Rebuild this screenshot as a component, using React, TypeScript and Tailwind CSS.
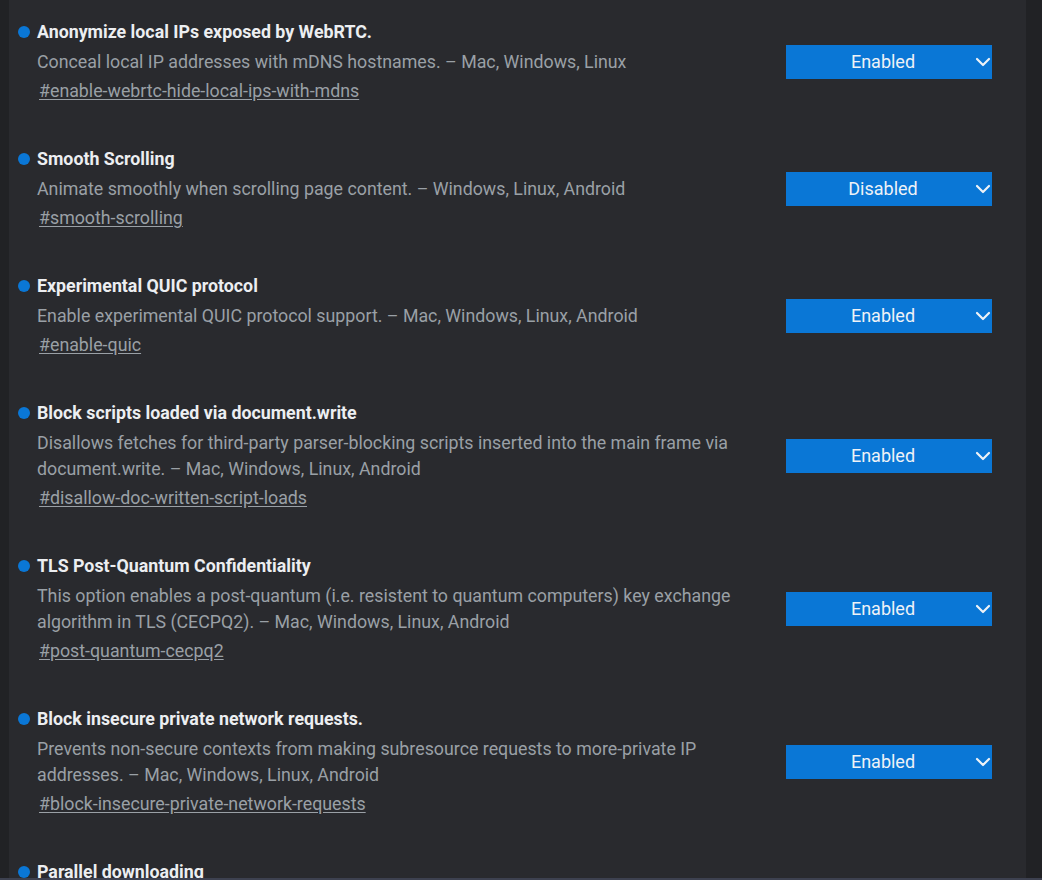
import { ChevronDown } from "lucide-react";

interface Flag {
  name: string;
  description: string;
  hash: string;
  value: "Enabled" | "Disabled" | "Default";
}

const flags: Flag[] = [
  {
    name: "Anonymize local IPs exposed by WebRTC.",
    description: "Conceal local IP addresses with mDNS hostnames. – Mac, Windows, Linux",
    hash: "enable-webrtc-hide-local-ips-with-mdns",
    value: "Enabled",
  },
  {
    name: "Smooth Scrolling",
    description: "Animate smoothly when scrolling page content. – Windows, Linux, Android",
    hash: "smooth-scrolling",
    value: "Disabled",
  },
  {
    name: "Experimental QUIC protocol",
    description: "Enable experimental QUIC protocol support. – Mac, Windows, Linux, Android",
    hash: "enable-quic",
    value: "Enabled",
  },
  {
    name: "Block scripts loaded via document.write",
    description:
      "Disallows fetches for third-party parser-blocking scripts inserted into the main frame via document.write. – Mac, Windows, Linux, Android",
    hash: "disallow-doc-written-script-loads",
    value: "Enabled",
  },
  {
    name: "TLS Post-Quantum Confidentiality",
    description:
      "This option enables a post-quantum (i.e. resistent to quantum computers) key exchange algorithm in TLS (CECPQ2). – Mac, Windows, Linux, Android",
    hash: "post-quantum-cecpq2",
    value: "Enabled",
  },
  {
    name: "Block insecure private network requests.",
    description:
      "Prevents non-secure contexts from making subresource requests to more-private IP addresses. – Mac, Windows, Linux, Android",
    hash: "block-insecure-private-network-requests",
    value: "Enabled",
  },
  {
    name: "Parallel downloading",
    description: "Enable parallel downloading to accelerate download speed. – Mac, Windows, Linux, Android",
    hash: "enable-parallel-downloading",
    value: "Enabled",
  },
];

function FlagRow({ flag }: { flag: Flag }) {
  return (
    <div className="flex items-center">
      <div className="flex w-[741px] shrink-0">
        <span className="mt-[5px] h-3 w-3 shrink-0 rounded-full bg-[#0a77d6]" />
        <div className="ml-[7px] flex flex-col">
          <h3 className="text-[17.8px] font-bold leading-[22px] text-[#eceef1]">{flag.name}</h3>
          <p className="mt-[6px] text-[17.8px] leading-[26px] text-[#9aa0a6]">{flag.description}</p>
          <a href={`#${flag.hash}`} className="ml-[2px] mt-[5px] text-[17.8px] leading-[22px] text-[#9aa0a6] underline underline-offset-2">
            #{flag.hash}
          </a>
        </div>
      </div>
      <div className="ml-auto flex h-[34px] w-[206px] items-center bg-[#0a77d6] pl-[9px] text-[#eef2f7]">
        <span className="flex-1 text-center text-[18px]">{flag.value}</span>
        <ChevronDown className="-mr-[3px] h-6 w-6" strokeWidth={2.2} />
      </div>
    </div>
  );
}

export default function App() {
  return (
    <div
      className="flex h-[880px] w-full flex-col overflow-hidden bg-[#212225]"
      style={{ fontFamily: "Roboto, 'Noto Sans', sans-serif" }}
    >
      <div className="flex min-h-0 flex-1">
        <div className="w-[9px] shrink-0" />
        <main className="flex flex-1 flex-col gap-[46px] overflow-hidden bg-[#292a2e] pl-[9px] pr-[34px] pt-[21px]">
          {flags.map((f) => (
            <FlagRow key={f.hash} flag={f} />
          ))}
        </main>
        <div className="w-[16px] shrink-0" />
      </div>
      <div className="h-[2px] shrink-0 bg-[#3d4150]" />
    </div>
  );
}
